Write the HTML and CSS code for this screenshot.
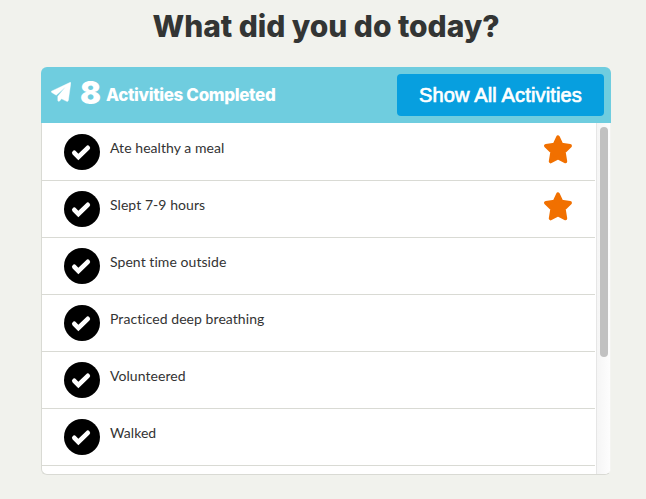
FILE: index.html
```
<!DOCTYPE html>
<html lang="en">
<head>
<meta charset="utf-8">
<title>Activities</title>
<link rel="stylesheet" href="styles.css">
</head>
<body>
<svg class="defs" width="0" height="0" aria-hidden="true">
  <symbol id="check" viewBox="0 0 36 36">
    <circle cx="18" cy="18" r="18" fill="#000"/>
    <path d="M10.3 18.8L14.4 23L23.8 13.8" fill="none" stroke="#fff" stroke-width="4.6" stroke-linecap="round" stroke-linejoin="miter"/>
  </symbol>
  <symbol id="star" viewBox="0 0 28 29">
    <path d="M14 2.2L17.4 9.6L26 10.9L19.8 17L21.3 26.4L14 22.6L6.7 26.4L8.2 17L2 10.9L10.6 9.6Z" fill="#f17000" stroke="#f17000" stroke-width="3.8" stroke-linejoin="round"/>
  </symbol>
</svg>
<h1 class="title">What did you do today?</h1>
<section class="panel">
  <header class="bar">
    <svg class="plane" viewBox="0 0 20 21"><path d="M19.3 0.3L0.4 9.2Q0 10 0.8 10.6L5.2 13.2L14.5 5L6.8 14.2V18.6Q7.5 20 8.6 19L10.5 16.8L15.6 19.3Q17 19.7 17.4 18.2L19.8 1Q19.8 0.2 19.3 0.3Z" fill="#fff" stroke="#fff" stroke-width=".4"/></svg>
    <span class="count">8</span>
    <span class="label">Activities Completed</span>
    <button class="show">Show All Activities</button>
  </header>
  <div class="body">
    <ul class="list">
      <li class="row"><svg class="check"><use href="#check"/></svg><span class="name">Ate healthy a meal</span><svg class="star"><use href="#star"/></svg></li>
      <li class="row"><svg class="check"><use href="#check"/></svg><span class="name">Slept 7-9 hours</span><svg class="star"><use href="#star"/></svg></li>
      <li class="row"><svg class="check"><use href="#check"/></svg><span class="name">Spent time outside</span></li>
      <li class="row"><svg class="check"><use href="#check"/></svg><span class="name">Practiced deep breathing</span></li>
      <li class="row"><svg class="check"><use href="#check"/></svg><span class="name">Volunteered</span></li>
      <li class="row"><svg class="check"><use href="#check"/></svg><span class="name">Walked</span></li>
    </ul>
    <div class="track"><div class="thumb"></div></div>
  </div>
</section>
</body>
</html>
```
FILE: styles.css
```
* { box-sizing: border-box; }
body { margin: 0; height: 499px; overflow: hidden; background: #f1f2ed; font-family: Lato, "Liberation Sans", sans-serif; color: #333; }
.defs { display: block; }
.title { margin: 0; height: 67px; padding-top: 5px; padding-left: 6px; text-align: center; white-space: nowrap; font: 800 30px/42px Inter, sans-serif; letter-spacing: -0.05px; color: #333534; }
.panel { width: 570px; height: 408px; margin-left: 41px; display: flex; flex-direction: column; }
.bar { height: 56px; flex: none; display: flex; align-items: center; background: #6fcddf; border-radius: 6px 6px 0 0; color: #fff; padding: 0 7px 0 10px; white-space: nowrap; }
.plane { width: 20px; height: 21px; margin-bottom: 5px; flex: none; }
.count { width: 23px; margin: 0 3px 5px 8px; font: 900 31px/40px Inter, sans-serif; flex: none; text-align: center; }
.label { margin-left: 1px; font: 800 17px/24px Inter, sans-serif; letter-spacing: -0.35px; }
.show { margin-left: auto; width: 207px; height: 42px; padding: 0; border: 0; border-radius: 4px; background: #079fdf; color: #fff; font: 20px/42px "Liberation Sans", sans-serif; letter-spacing: 0.15px; -webkit-text-stroke: 0.7px #fff; flex: none; }
.body { flex: 1; display: flex; min-height: 0; overflow: hidden; background: #fff; border: 1px solid #d9dad4; border-top: 0; border-right-color: #f4f4f1; border-radius: 0 0 6px 6px; }
.list { flex: 1; margin: 0; padding: 1px 1px 0 0; list-style: none; }
.row { height: 57px; display: flex; border-bottom: 1px solid #d9dad4; padding: 10px 23px 0 22px; }
.check { width: 36px; height: 36px; flex: none; }
.name { margin-left: 10px; padding-top: 4px; font: 14px/20px Lato, sans-serif; font-variant-ligatures: none; letter-spacing: 0.06px; white-space: nowrap; color: #333; }
.star { width: 28px; height: 29px; margin: 1px 0 0 auto; flex: none; }
.track { width: 14px; flex: none; border-left: 1px solid #e6e6e6; background: linear-gradient(90deg, #f5f5f5, #fdfdfd); padding: 4px 2px 0 3px; }
.thumb { width: 8px; height: 230px; border-radius: 4px; background: #c1c1c1; }
```
